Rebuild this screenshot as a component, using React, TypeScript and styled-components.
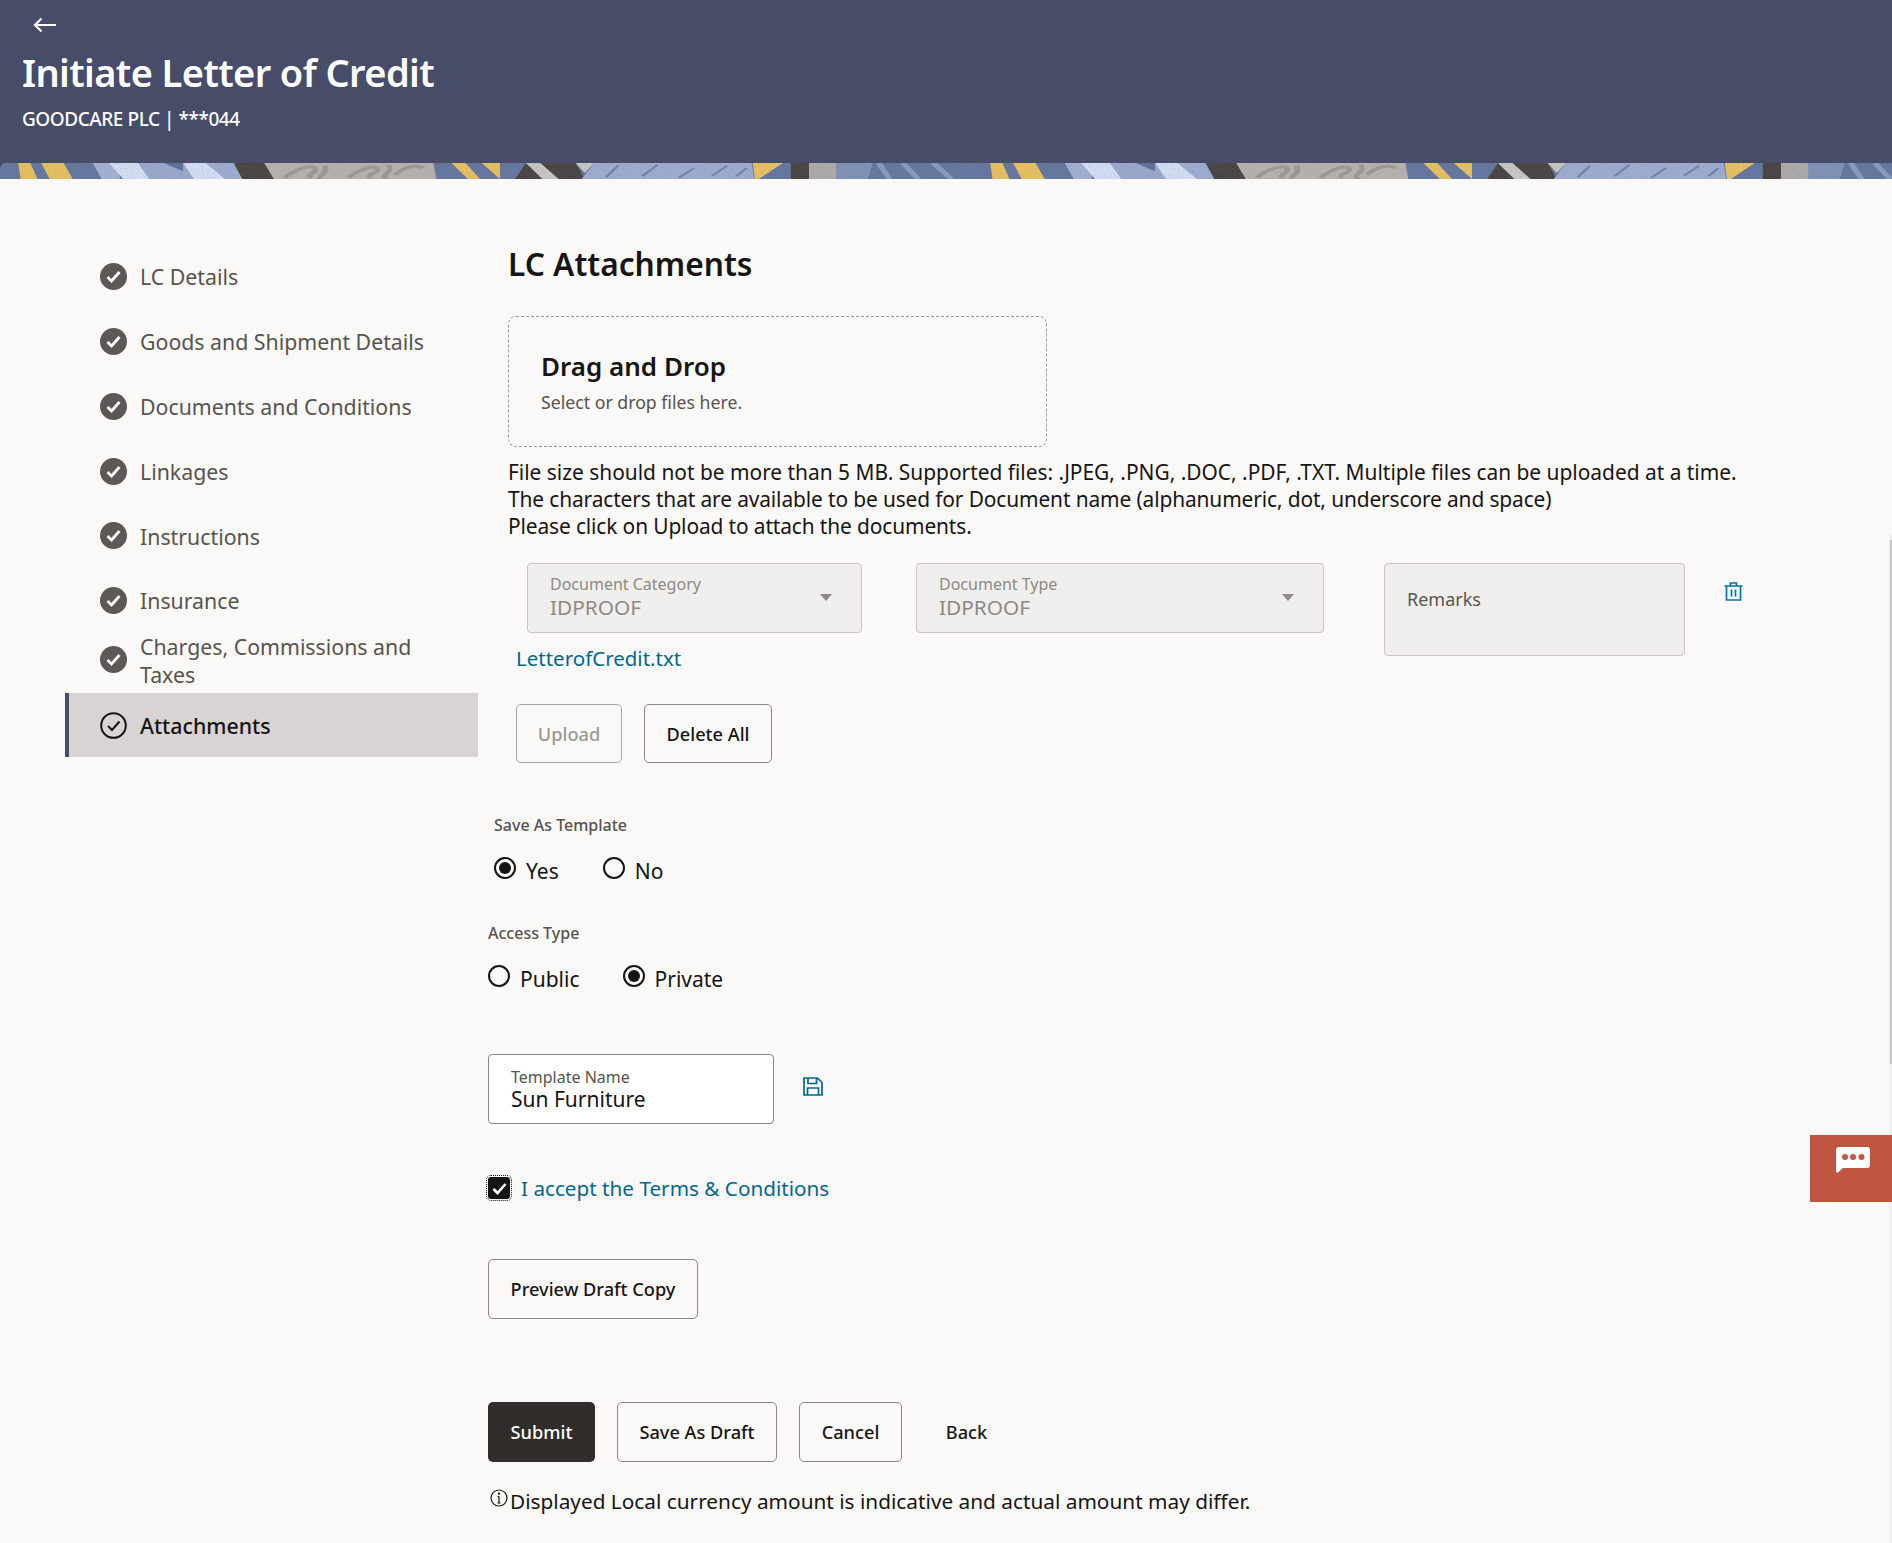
import React from 'react'
import styled, { createGlobalStyle } from 'styled-components'

const steps = [
  { label: 'LC Details', height: 65 },
  { label: 'Goods and Shipment Details', height: 65 },
  { label: 'Documents and Conditions', height: 65 },
  { label: 'Linkages', height: 65 },
  { label: 'Instructions', height: 64 },
  { label: 'Insurance', height: 65 },
  { label: 'Charges, Commissions and Taxes', height: 60.5 },
]

export default function App() {
  return (
    <Page>
      <GlobalStyle />
      <Header>
        <HeaderInner>
          <BackArrow viewBox="0 0 24 16">
            <path d="M23 8H2M8.5 1.5L2 8l6.5 6.5" fill="none" stroke="#fff" strokeWidth="2.2" />
          </BackArrow>
          <Title>Initiate Letter of Credit</Title>
          <Account>GOODCARE PLC | ***044</Account>
        </HeaderInner>
        <Band />
      </Header>

      <Body>
        <Sidebar>
          {steps.map((s) => (
            <Step key={s.label} $height={s.height}>
              <DoneIcon />
              <StepText>{s.label}</StepText>
            </Step>
          ))}
          <Step $active $height={64}>
            <ActiveIcon />
            <StepText $active>Attachments</StepText>
          </Step>
        </Sidebar>

        <Main>
          <Heading>LC Attachments</Heading>
          <DropZone>
            <DropTitle>Drag and Drop</DropTitle>
            <DropHint>Select or drop files here.</DropHint>
          </DropZone>
          <Help>
            <HelpLine>File size should not be more than 5 MB. Supported files: .JPEG, .PNG, .DOC, .PDF, .TXT. Multiple files can be uploaded at a time.</HelpLine>
            <HelpLine $tight>The characters that are available to be used for Document name (alphanumeric, dot, underscore and space)</HelpLine>
            <HelpLine $tight>Please click on Upload to attach the documents.</HelpLine>
          </Help>

          <Attachment>
            <div>
              <Selects>
                <SelectBox $width={335}>
                  <div>
                    <SelectLabel>Document Category</SelectLabel>
                    <SelectValue>IDPROOF</SelectValue>
                  </div>
                  <Caret />
                </SelectBox>
                <SelectBox $width={408}>
                  <div>
                    <SelectLabel>Document Type</SelectLabel>
                    <SelectValue>IDPROOF</SelectValue>
                  </div>
                  <Caret />
                </SelectBox>
              </Selects>
              <FileLink>LetterofCredit.txt</FileLink>
            </div>
            <Remarks>Remarks</Remarks>
            <IconSlot>
              <svg width="19" height="19" viewBox="0 0 19 19" fill="none" stroke="#0572a8" strokeWidth="1.7">
                <path d="M0.5 4H18.5M6.5 4V1H12.5V4M2.5 4V18H16.5V4M7.5 7.5V14.5M11.5 7.5V14.5" />
              </svg>
            </IconSlot>
          </Attachment>

          <UploadRow>
            <Button $width={106} $height={59} $disabled>Upload</Button>
            <Button $width={128} $height={59}>Delete All</Button>
          </UploadRow>

          <FieldLabel $indent={6} $top={52}>Save As Template</FieldLabel>
          <RadioGroup $indent={6} $top={22} $gap={44}>
            <RadioOption><Radio $checked />Yes</RadioOption>
            <RadioOption><Radio />No</RadioOption>
          </RadioGroup>

          <FieldLabel $indent={0} $top={38}>Access Type</FieldLabel>
          <RadioGroup $indent={0} $top={22} $gap={43}>
            <RadioOption><Radio />Public</RadioOption>
            <RadioOption><Radio $checked />Private</RadioOption>
          </RadioGroup>

          <TemplateRow>
            <TemplateField>
              <TemplateLabel>Template Name</TemplateLabel>
              <TemplateValue>Sun Furniture</TemplateValue>
            </TemplateField>
            <svg width="20" height="19" viewBox="0 0 20 19" fill="none" stroke="#00688c" strokeWidth="1.7">
              <path d="M1 1H14.5L19 5.5V18H1ZM5 1V6.5H13.5V1M4.5 18V11H15.5V18" />
            </svg>
          </TemplateRow>

          <TermsRow>
            <Checkbox>
              <svg width="15" height="13" viewBox="0 0 15 13" fill="none" stroke="#fff" strokeWidth="2.6">
                <path d="M1.5 7L5.5 11L13.5 2" />
              </svg>
            </Checkbox>
            <TermsLink>I accept the Terms &amp; Conditions</TermsLink>
          </TermsRow>

          <PreviewRow>
            <Button $width={210} $height={60}>Preview Draft Copy</Button>
          </PreviewRow>

          <Actions>
            <Button $width={107} $height={60} $primary>Submit</Button>
            <Button $width={160} $height={60}>Save As Draft</Button>
            <Button $width={103} $height={60}>Cancel</Button>
            <Button $width={85} $height={60} $plain>Back</Button>
          </Actions>

          <Note>
            <svg width="18" height="18" viewBox="0 0 18 18" fill="none" stroke="#161513" strokeWidth="1.2">
              <circle cx="9" cy="9" r="8" />
              <path d="M9 7.5V14M7.4 14H10.6M7.6 7.5H9" />
              <circle cx="9" cy="4.6" r="0.6" fill="#161513" />
            </svg>
            <NoteText>Displayed Local currency amount is indicative and actual amount may differ.</NoteText>
          </Note>
        </Main>
      </Body>

      <ScrollTrack>
        <ScrollThumb />
      </ScrollTrack>
      <ChatTab>
        <svg width="34" height="26" viewBox="0 0 34 26">
          <path d="M3 0H31A3 3 0 0 1 34 3V18A3 3 0 0 1 31 21H7L2 25.5C1 26 0 25.5 0 24V3A3 3 0 0 1 3 0Z" fill="#fff" />
          <circle cx="9" cy="10" r="3" fill="#bf5640" />
          <circle cx="17" cy="10" r="3" fill="#bf5640" />
          <circle cx="25.5" cy="10" r="3" fill="#bf5640" />
        </svg>
      </ChatTab>
    </Page>
  )
}

function DoneIcon() {
  return (
    <svg width="27" height="27" viewBox="0 0 27 27">
      <circle cx="13.5" cy="13.5" r="13.5" fill="#5b5856" />
      <path d="M7.5 14L11.5 18L19.5 9" fill="none" stroke="#fff" strokeWidth="2.8" />
    </svg>
  )
}

function ActiveIcon() {
  return (
    <svg width="27" height="27" viewBox="0 0 27 27" fill="none" stroke="#161513" strokeWidth="2">
      <circle cx="13.5" cy="13.5" r="12.3" />
      <path d="M8 14L12 18L19.5 9.5" />
    </svg>
  )
}

// repeating strip of the header artwork, coordinates are px x 1.65 wide / x 3 high
function Band() {
  return (
    <BandSvg height="16" width="100%">
      <defs>
        <filter id="grain" x="0" y="0" width="100%" height="100%">
          <feTurbulence type="fractalNoise" baseFrequency="0.7" numOctaves="2" seed="4" />
          <feColorMatrix values="0 0 0 0 0.2  0 0 0 0 0.2  0 0 0 0 0.25  0 0 0 1.4 -0.55" />
        </filter>
        <pattern id="band" patternUnits="userSpaceOnUse" width="972" height="16">
          <g transform="scale(0.606 0.3333)">
            <rect width="1604" height="48" fill="#6577a0" />
            <polygon points="30,0 50,0 62,48 34,48" fill="#e8c25f" />
            <polygon points="68,0 105,0 120,48 82,48" fill="#e8c25f" />
            <polygon points="153,0 195,0 198,48 168,48" fill="#a3b2d3" />
            <polygon points="180,0 228,0 247,48 203,48" fill="#d5e0f6" />
            <polygon points="228,0 302,0 322,48 247,48" fill="#9aa9cd" />
            <polygon points="270,0 302,0 302,25" fill="#5f709c" />
            <polygon points="302,0 340,0 372,48 320,48" fill="#d5e0f6" />
            <polygon points="340,0 385,0 400,48 372,48" fill="#9fadd0" />
            <polygon points="386,0 436,0 452,48 400,48" fill="#474441" />
            <polygon points="436,0 715,0 720,48 452,48" fill="#b7b4ae" />
            <path
              d="M470 44C485 20 515 2 520 16S500 38 515 44M535 8C545 30 520 44 530 48M575 44C590 22 615 4 622 16S600 36 612 44M640 6C655 24 620 40 640 48M652 36C665 12 690 2 698 16"
              fill="none"
              stroke="#9d9a95"
              strokeWidth="9"
            />
            <polygon points="745,0 768,0 792,48 772,48" fill="#e8c25f" />
            <polygon points="795,0 825,0 825,48" fill="#e8c25f" />
            <polygon points="850,48 868,0 895,48" fill="#474441" />
            <polygon points="868,0 892,0 922,48 895,48" fill="#cac8c4" />
            <polygon points="892,0 950,0 965,48 922,48" fill="#474441" />
            <polygon points="950,0 980,0 965,30" fill="#cac8c4" />
            <polygon points="980,0 1240,0 1245,48 960,48" fill="#9fadd0" />
            <path d="M1000 42L1020 8M1060 40L1085 5M1120 45L1145 15M1175 38L1200 8M1215 40L1232 15" stroke="#7385ac" strokeWidth="5" />
            <polygon points="1242,0 1292,0 1252,48 1246,48" fill="#e8c25f" />
            <rect x="1305" width="30" height="48" fill="#474441" />
            <rect x="1335" width="46" height="48" fill="#aeaca8" />
            <polygon points="1380,0 1440,0 1432,48 1380,48" fill="#8192b7" />
            <path d="M1450 0L1468 48M1490 0L1515 48M1540 0L1570 48" stroke="#8a9bc0" strokeWidth="10" />
          </g>
        </pattern>
      </defs>
      <rect width="100%" height="16" fill="url(#band)" />
      <rect width="100%" height="16" filter="url(#grain)" opacity="0.35" />
    </BandSvg>
  )
}

const GlobalStyle = createGlobalStyle`
  html, body {
    margin: 0;
    padding: 0;
    background: #fbf9f8;
  }
  * {
    box-sizing: border-box;
  }
`

const Page = styled.div`
  position: relative;
  min-height: 1543px;
  overflow: hidden;
  background: #fbf9f8;
  color: #161513;
  font-family: "Noto Sans", "Open Sans", sans-serif;
`

const Header = styled.header`
  background: #474c68;
  height: 179px;
  display: flex;
  flex-direction: column;
`

const HeaderInner = styled.div`
  height: 163px;
  padding: 17px 22px 0;
  color: #fff;
`

const BackArrow = styled.svg`
  display: block;
  width: 24px;
  height: 16px;
  margin-left: 11px;
`

const Title = styled.h1`
  margin: 15px 0 0;
  font-size: 38px;
  line-height: 48px;
  font-weight: 600;
  letter-spacing: -0.6px;
`

const Account = styled.div`
  margin-top: 10px;
  font-size: 19px;
  line-height: 26px;
  font-weight: 500;
  letter-spacing: -0.45px;
`

const BandSvg = styled.svg`
  display: block;
  border-top-left-radius: 6px;
`

const Body = styled.div`
  display: flex;
  align-items: flex-start;
`

const Sidebar = styled.nav`
  width: 413px;
  margin-left: 65px;
  padding-top: 64.5px;
  flex: none;
`

const Step = styled.div<{ $height: number; $active?: boolean }>`
  height: ${(p) => p.$height}px;
  padding: 0 40px ${(p) => (p.$height < 64 ? '6px' : '0')} ${(p) => (p.$active ? '31px' : '35px')};
  display: flex;
  align-items: center;
  gap: 13px;
  background: ${(p) => (p.$active ? '#d8d4d3' : 'transparent')};
  border-left: ${(p) => (p.$active ? '4px solid #474c68' : 'none')};
  svg {
    flex: none;
  }
`

const StepText = styled.span<{ $active?: boolean }>`
  position: relative;
  top: 1px;
  font-size: 21.3px;
  line-height: 28px;
  font-weight: ${(p) => (p.$active ? 500 : 400)};
  color: ${(p) => (p.$active ? '#161513' : '#57534f')};
`

const Main = styled.main`
  flex: 1;
  margin-left: 10px;
  display: flex;
  flex-direction: column;
  align-items: flex-start;
`

const Heading = styled.h2`
  margin: 65px 0 0 20px;
  font-size: 31.7px;
  line-height: 40px;
  font-weight: 600;
`

const DropZone = styled.div`
  width: 539px;
  height: 131px;
  margin: 32px 0 0 20px;
  padding: 29px 32px 0;
  border: 1px dashed #9b9896;
  border-radius: 8px;
`

const DropTitle = styled.div`
  font-size: 26px;
  line-height: 40px;
  font-weight: 600;
`

const DropHint = styled.div`
  margin-top: 2px;
  font-size: 17.7px;
  line-height: 28px;
  color: #57534f;
`

const Help = styled.div`
  margin: 11.5px 0 0 20px;
  font-size: 20.9px;
  line-height: 27px;
  white-space: nowrap;
`

const HelpLine = styled.div<{ $tight?: boolean }>`
  letter-spacing: ${(p) => (p.$tight ? '-0.12px' : '0')};
`

const Attachment = styled.div`
  display: flex;
  align-items: flex-start;
  margin: 23.5px 0 0 28px;
`

const Selects = styled.div`
  display: flex;
  gap: 54px;
  padding-left: 11px;
`

const SelectBox = styled.div<{ $width: number }>`
  width: ${(p) => p.$width}px;
  height: 70px;
  padding: 0 29px 0 22px;
  display: flex;
  align-items: center;
  justify-content: space-between;
  background: #f1efed;
  border: 1px solid #c9c6c3;
  border-radius: 4px;
`

const SelectLabel = styled.div`
  margin-top: -2px;
  font-size: 16px;
  line-height: 20px;
  color: #8d8986;
`

const SelectValue = styled.div`
  font-size: 20.8px;
  line-height: 26px;
  color: #8d8986;
`

const Caret = styled.span`
  width: 0;
  height: 0;
  margin-top: -2px;
  border-left: 6px solid transparent;
  border-right: 6px solid transparent;
  border-top: 7px solid #8d8986;
`

const FileLink = styled.div`
  margin-top: 11px;
  font-size: 20.5px;
  line-height: 28px;
  color: #00688c;
`

const Remarks = styled.div`
  width: 301px;
  height: 93px;
  margin-left: 60px;
  padding: 23px 22px 0;
  font-size: 18px;
  line-height: 24px;
  color: #57534f;
  background: #f1efed;
  border: 1px solid #c9c6c3;
  border-radius: 4px;
`

const IconSlot = styled.div`
  margin: 19px 0 0 39px;
  line-height: 0;
`

const UploadRow = styled.div`
  display: flex;
  gap: 22px;
  margin: 32px 0 0 28px;
`

const Button = styled.button<{ $width: number; $height: number; $primary?: boolean; $plain?: boolean; $disabled?: boolean }>`
  width: ${(p) => p.$width}px;
  height: ${(p) => p.$height}px;
  padding: 0;
  font-family: inherit;
  font-size: 18.2px;
  font-weight: 500;
  color: ${(p) => (p.$primary ? '#fff' : p.$disabled ? '#9b9896' : '#161513')};
  background: ${(p) => (p.$primary ? '#312d2a' : 'transparent')};
  border: ${(p) => (p.$primary || p.$plain ? '0' : `1px solid ${p.$disabled ? '#aaa8a5' : '#8a8785'}`)};
  border-radius: 5px;
`

const FieldLabel = styled.div<{ $indent: number; $top: number }>`
  margin: ${(p) => p.$top}px 0 0 ${(p) => p.$indent}px;
  font-size: 16px;
  line-height: 20px;
  font-weight: 500;
  color: #57534f;
`

const RadioGroup = styled.div<{ $indent: number; $top: number; $gap: number }>`
  display: flex;
  gap: ${(p) => p.$gap}px;
  margin: ${(p) => p.$top}px 0 0 ${(p) => p.$indent}px;
`

const RadioOption = styled.label`
  display: flex;
  align-items: center;
  gap: 10px;
  font-size: 21px;
  line-height: 28px;
`

const Radio = styled.span<{ $checked?: boolean }>`
  position: relative;
  width: 22px;
  height: 22px;
  margin-top: -6px;
  border: 2px solid #161513;
  border-radius: 50%;
  &::after {
    content: '';
    display: ${(p) => (p.$checked ? 'block' : 'none')};
    position: absolute;
    inset: 3px;
    border-radius: 50%;
    background: #161513;
  }
`

const TemplateRow = styled.div`
  display: flex;
  align-items: center;
  gap: 29px;
  margin-top: 61px;
  svg {
    margin-top: -6px;
  }
`

const TemplateField = styled.div`
  width: 286px;
  height: 70px;
  padding: 12px 22px 0;
  background: #fff;
  border: 1px solid #8a8785;
  border-radius: 4px;
`

const TemplateLabel = styled.div`
  font-size: 16px;
  line-height: 20px;
  color: #57534f;
`

const TemplateValue = styled.div`
  font-size: 21px;
  line-height: 24px;
`

const TermsRow = styled.div`
  display: flex;
  align-items: center;
  gap: 11px;
  margin-top: 50px;
`

const Checkbox = styled.span`
  width: 22px;
  height: 22px;
  display: flex;
  align-items: center;
  justify-content: center;
  background: #161513;
  border-radius: 3px;
  outline: 1px dotted #161513;
  outline-offset: 1px;
`

const TermsLink = styled.span`
  font-size: 20.7px;
  line-height: 28px;
  color: #00688c;
`

const PreviewRow = styled.div`
  margin-top: 57px;
`

const Actions = styled.div`
  display: flex;
  gap: 22px;
  margin-top: 83px;
`

const Note = styled.div`
  display: flex;
  align-items: center;
  gap: 2px;
  margin: 25px 0 0 2px;
  svg {
    margin-top: -6px;
  }
`

const NoteText = styled.span`
  font-size: 20.8px;
  line-height: 28px;
`

const ChatTab = styled.div`
  position: absolute;
  top: 1135px;
  right: 0;
  width: 82px;
  height: 67px;
  padding: 12px 0 0 26px;
  background: #bf5640;
`

const ScrollTrack = styled.div`
  position: absolute;
  top: 533px;
  bottom: 0;
  right: 0;
  width: 3px;
  background: #f1f0ef;
`

const ScrollThumb = styled.div`
  margin: 7px 0 0 1px;
  width: 2px;
  height: 524px;
  background: #c4c4c4;
`
